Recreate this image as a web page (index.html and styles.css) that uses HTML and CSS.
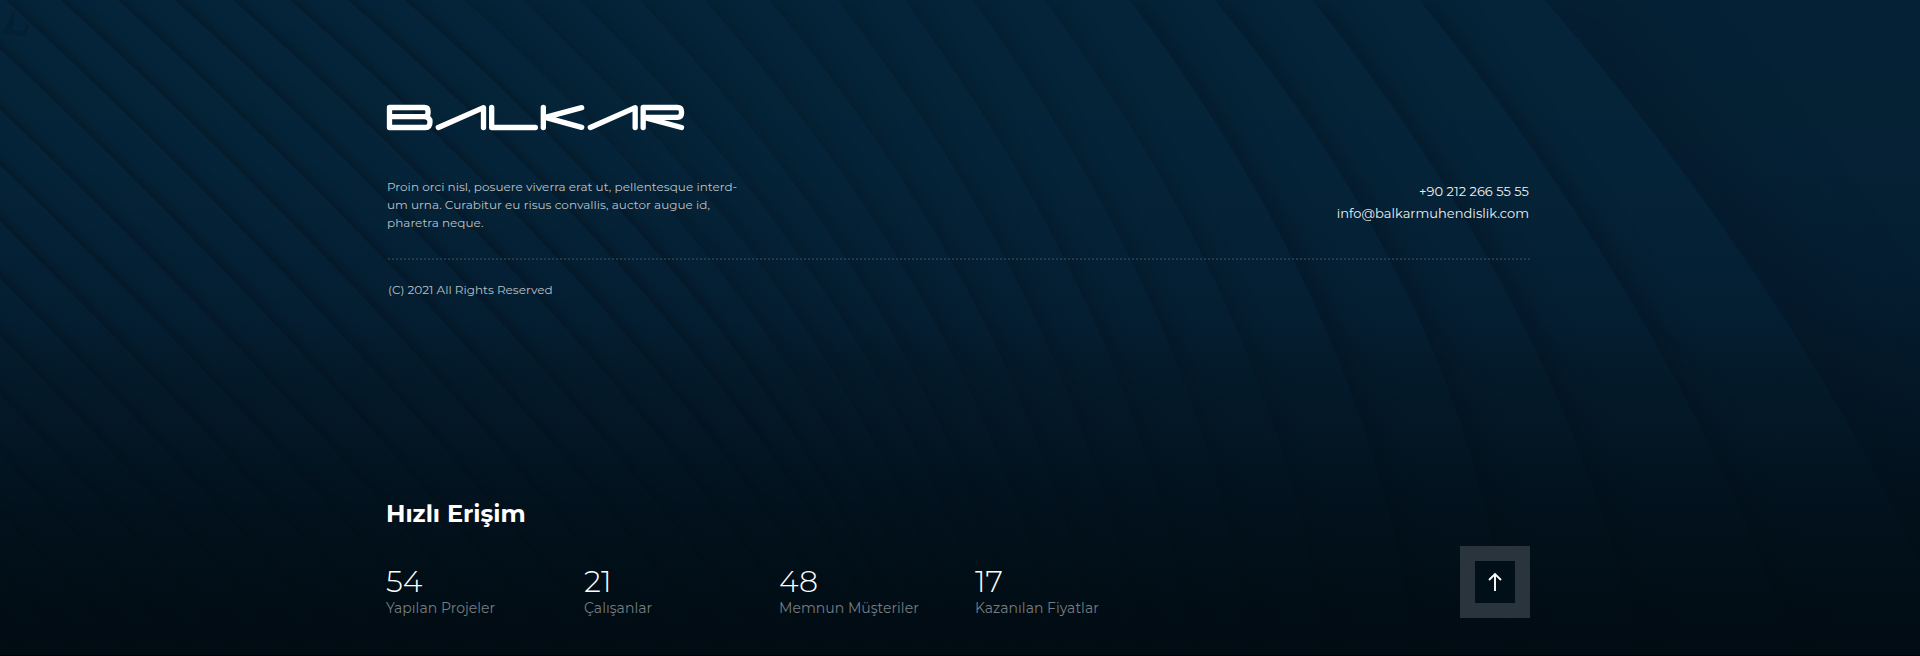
FILE: index.html
```html
<!DOCTYPE html>
<html lang="tr">
<head>
<meta charset="utf-8">
<title>Balkar</title>
<link rel="stylesheet" href="styles.css">
</head>
<body>
<footer class="footer">
  <svg class="waves" viewBox="0 0 1920 656" preserveAspectRatio="none" aria-hidden="true">
    <g class="wave-far"><path d="M1545 0Q1828 328 1960 656H-700V0Z"/></g>
    <g class="wave-wide">
      <path d="M1420 0Q1685 328 1797 656H-700V0Z"/>
      <path d="M1313 0Q1573 328 1640 656H-700V0Z"/>
      <path d="M1215 0Q1485 328 1508 656H-700V0Z"/>
      <path d="M1130 0Q1378 328 1415 656H-700V0Z"/>
    </g>
    <g class="wave-mid">
      <path d="M1045 0Q1287 328 1326 656H-700V0Z"/>
      <path d="M973 0Q1212 328 1252 656H-700V0Z"/>
      <path d="M905 0Q1146 328 1192 656H-700V0Z"/>
      <path d="M838 0Q1091 328 1140 656H-700V0Z"/>
      <path d="M770 0Q1041 328 1097 656H-700V0Z"/>
      <path d="M705 0Q995 328 1058 656H-700V0Z"/>
      <path d="M640 0Q949 328 1019 656H-700V0Z"/>
      <path d="M580 0Q910 328 993 656H-700V0Z"/>
      <path d="M523 0Q869 328 960 656H-700V0Z"/>
      <path d="M465 0Q826 328 932 656H-700V0Z"/>
    </g>
    <g class="wave-near">
      <path d="M405 0Q780 328 908 656H-700V0Z"/>
      <path d="M348 0Q726 328 893 656H-700V0Z"/>
      <path d="M290 0Q665 328 860 656H-700V0Z"/>
      <path d="M233 0Q604 328 820 656H-700V0Z"/>
      <path d="M175 0Q539 328 772 656H-700V0Z"/>
      <path d="M118 0Q478 328 722 656H-700V0Z"/>
      <path d="M61 0Q420 328 667 656H-700V0Z"/>
      <path d="M6 0Q360 328 615 656H-700V0Z"/>
      <path d="M-52 0Q301 328 563 656H-700V0Z"/>
      <path d="M-118 0Q242 328 512 656H-700V0Z"/>
      <path d="M-175 0Q183 328 460 656H-700V0Z"/>
      <path d="M-232 0Q125 328 405 656H-700V0Z"/>
      <path d="M-289 0Q67 328 350 656H-700V0Z"/>
      <path d="M-345 0Q9 328 297 656H-700V0Z"/>
      <path d="M-402 0Q-48 328 240 656H-700V0Z"/>
      <path d="M-458 0Q-105 328 185 656H-700V0Z"/>
      <path d="M-514 0Q-161 328 130 656H-700V0Z"/>
      <path d="M-570 0Q-218 328 75 656H-700V0Z"/>
      <path d="M-626 0Q-274 328 20 656H-700V0Z"/>
    </g>
    <path class="knot" fill-rule="evenodd" d="M14 10L2 34L24 36L30 26L24 23L27 28L20 32L12 30L14 22Z"/>
  </svg>
  <div class="shade"></div>

  <div class="content">
    <svg class="logo" viewBox="51 45 891 75" role="img" aria-label="Balkar">
      <g fill="none" stroke="#fff" stroke-width="16" stroke-linecap="round" stroke-linejoin="round">
        <path d="M58.500 52.500H163Q174 52.500 174 63V70Q174 80 163 80H58.500M163 80Q180 82 180 95Q180 112.500 166 112.500H58.500V52.500"/>
        <path d="M205 112.500L340.500 53V112.500"/>
        <path d="M365 52.500V112.500H496"/>
        <path d="M520 52.500V112.500M635 53L526 82L635 112"/>
        <path d="M661 112.500L795.500 53V112.500"/>
        <path d="M819.500 112.500V52.500H922Q934.500 52.500 934.500 64V70Q934.500 82 922 82H822L934.500 112.500"/>
      </g>
    </svg>

    <div class="info">
      <p class="about">Proin orci nisl, posuere viverra erat ut, pellentesque interd-<br>um urna. Curabitur eu risus convallis, auctor augue id,<br>pharetra neque.</p>
      <div class="contact">
        <div>+90 212 266 55 55</div>
        <div>info@balkarmuhendislik.com</div>
      </div>
    </div>

    <div class="divider"></div>
    <div class="copyright">(C) 2021 All Rights Reserved</div>

    <h2 class="title">Hızlı Erişim</h2>
    <div class="bottom">
      <div class="stats">
        <div class="stat"><div class="num">54</div><div class="label">Yapılan Projeler</div></div>
        <div class="stat"><div class="num">21</div><div class="label">Çalışanlar</div></div>
        <div class="stat"><div class="num">48</div><div class="label">Memnun Müşteriler</div></div>
        <div class="stat"><div class="num">17</div><div class="label">Kazanılan Fiyatlar</div></div>
      </div>
      <a class="to-top" href="#" aria-label="Yukarı">
        <svg viewBox="0 0 14 20" width="14" height="20" fill="none" stroke="#fff" stroke-width="1.900"><path d="M7 19V2M1 8L7 2L13 8"/></svg>
      </a>
    </div>
  </div>
</footer>
</body>
</html>
```
FILE: styles.css
```css
* { box-sizing: border-box; }
body { margin: 0; background: #000; font-family: Montserrat, Inter, "Noto Sans", sans-serif; }
.footer { position: relative; height: 656px; overflow: hidden; background: #052135; border-bottom: 1px solid #000; }
.waves, .shade { position: absolute; inset: 0; width: 100%; height: 100%; }
.waves path { fill: #052439; }
.wave-far path { filter: drop-shadow(55px 0 35px rgba(4, 26, 44, .7)); }
.wave-wide path { filter: drop-shadow(14px 0 12px rgba(3, 20, 36, .58)); }
.wave-mid path { filter: drop-shadow(9px 0 9px rgba(3, 20, 32, .4)); }
.wave-near path { filter: drop-shadow(6px -2px 5px rgba(3, 20, 32, .55)); }
.waves .knot { fill: #041f31; }
.shade {
  background: linear-gradient(to bottom,
    rgba(2, 14, 28, 0) 0, rgba(2, 14, 28, .02) 25%, rgba(4, 16, 32, .3) 48%,
    rgba(2, 14, 24, .5) 60%, rgba(2, 13, 22, .7) 72%, rgba(1, 12, 19, .86) 86%, rgba(1, 10, 17, .96) 100%);
}
.content { position: relative; width: 1143px; margin-left: 387px; padding-top: 105px; color: #fff; }
.logo { display: block; width: 297px; height: 25px; overflow: visible; }
.info { display: flex; justify-content: space-between; margin-top: 48px; height: 80px; }
.about { margin: 0; font-size: 12px; line-height: 18px; letter-spacing: .03px; color: #b9c2c8; white-space: nowrap; }
.contact { padding-top: 2px; padding-right: 1px; font-size: 13px; line-height: 22px; letter-spacing: .02px; text-align: right; color: #eef1f3; }
.divider { height: 2px; margin-left: 1px; background: repeating-linear-gradient(to right, #203a4c 0 2px, transparent 2px 4px); }
.copyright { margin: 21px 0 0 1px; font-size: 12px; line-height: 18px; color: #b9c2c8; }
.title { margin: 200px 0 0 -1px; font-size: 24px; line-height: 30px; font-weight: 700; }
.bottom { display: flex; justify-content: space-between; margin-top: 17px; }
.stats { display: flex; padding-top: 18px; margin-left: -1px; }
.stat { width: 196px; white-space: nowrap; }
.stat:first-child { width: 198px; }
.stat:nth-child(2) { width: 195px; }
.num { font-size: 30px; line-height: 36px; font-weight: 300; }
.label { font-size: 14px; line-height: 18px; margin-top: -1px; letter-spacing: .03px; color: #767d82; }
.to-top { display: flex; align-items: center; justify-content: center; width: 70px; height: 72px; background: #010f19; border: 15px solid #29343c; }
```
